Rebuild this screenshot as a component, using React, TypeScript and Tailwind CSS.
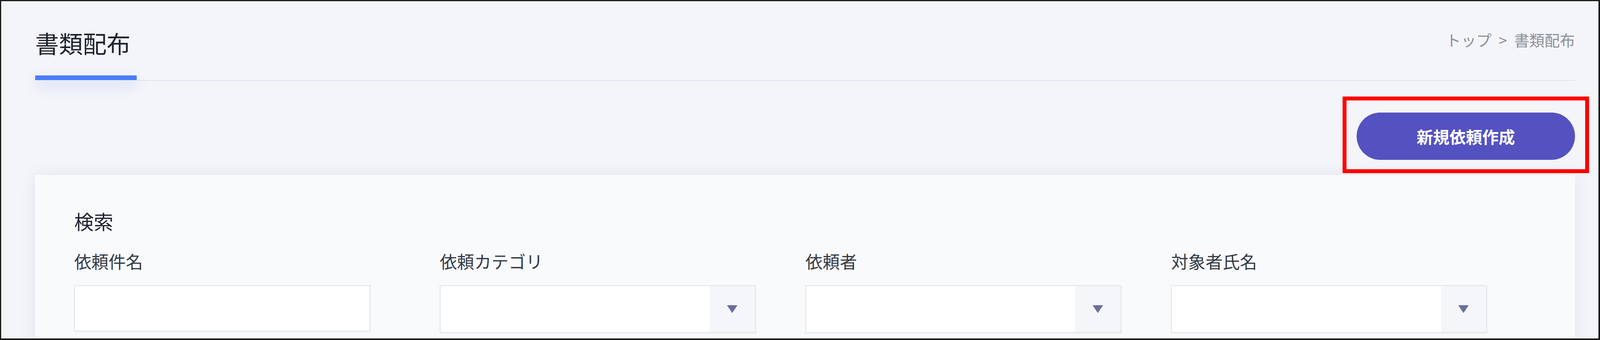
import React from 'react';

const fieldLabel = 'text-[44px] leading-none text-[#333a45]';

function TextField({ label }: { label: string }) {
  return (
    <div className="flex flex-col">
      <span className={fieldLabel}>{label}</span>
      <input
        type="text"
        className="mt-[40px] w-[81%] h-[118px] bg-white border-2 border-[#e3e4e8] shadow-[0_2px_6px_rgba(0,0,0,0.04)] outline-none"
      />
    </div>
  );
}

function SelectField({ label }: { label: string }) {
  return (
    <div className="flex flex-col">
      <span className={fieldLabel}>{label}</span>
      <div className="mt-[40px] flex w-[86.4%] h-[122px] bg-white border-2 border-[#e3e4e8] shadow-[0_2px_6px_rgba(0,0,0,0.04)]">
        <div className="flex-1" />
        <div className="w-[116px] h-full bg-[#f5f6fa] flex items-center justify-center">
          <svg width="27" height="20" viewBox="0 0 27 20">
            <path d="M0 0 H27 L13.5 20 Z" fill="#6b6f9b" />
          </svg>
        </div>
      </div>
    </div>
  );
}

function App() {
  return (
    <div
      className="w-full h-[870px] overflow-hidden bg-[#f4f5f9] border-t-[3px] border-l-[3px] border-r-[4px] border-b-[4px] border-[#1b1b1b]"
      style={{ fontFamily: '"Noto Sans CJK JP", "Noto Sans", sans-serif' }}
    >
      <div className="pl-[87px] pr-[60px]">
        {/* header */}
        <div className="flex items-start justify-between pt-[76px]">
          <h1 className="text-[61px] leading-none font-normal text-[#1d2230]">書類配布</h1>
          <div className="mt-[3px] text-[39px] leading-none text-[#8b8f98] flex gap-[18px]">
            <span>トップ</span>
            <span>&gt;</span>
            <span>書類配布</span>
          </div>
        </div>
        <div className="flex items-start mt-[53px]">
          <div className="w-[260px] h-[12px] bg-[#4a7df8] shadow-[0_14px_34px_rgba(74,125,248,0.28)]" />
          <div className="flex-1 h-[2px] mt-[12px] bg-[#dfe3ec]" />
        </div>

        {/* action */}
        <div className="flex justify-end mt-[40px] mr-[-36px]">
          <div className="border-[10px] border-[#ff0000] pl-[26px] pr-[26px] pt-[31px] pb-[24px]">
            <button className="w-[559px] h-[121px] rounded-full bg-[#5451c1] text-white text-[42px] font-bold leading-none">
              新規依頼作成
            </button>
          </div>
        </div>

        {/* search panel */}
        <div className="mt-[5px] bg-[#f9fafc] shadow-[0_0_40px_rgba(40,50,100,0.08)] pl-[100px] pr-[98px] pt-[92px] pb-[60px]">
          <h2 className="text-[50px] leading-none font-normal text-[#1f2430]">検索</h2>
          <div className="mt-[56px] grid grid-cols-4">
            <TextField label="依頼件名" />
            <SelectField label="依頼カテゴリ" />
            <SelectField label="依頼者" />
            <SelectField label="対象者氏名" />
          </div>
        </div>
      </div>
    </div>
  );
}

export default App;
